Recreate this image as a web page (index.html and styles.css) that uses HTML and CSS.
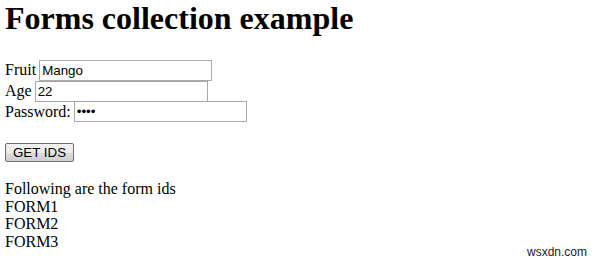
FILE: index.html
```html
<!DOCTYPE html>
<html>
<head>
<meta charset="utf-8">
<link rel="stylesheet" href="styles.css">
</head>
<body>
<h1 class="title">Forms collection example</h1>
<form class="row" id="FORM1"><span class="lbl">Fruit</span> <input class="field" type="text" value="Mango"></form>
<form class="row" id="FORM2"><span class="lbl">Age</span> <input class="field" type="text" value="22"></form>
<form class="row" id="FORM3"><span class="lbl">Password:</span> <input class="field" type="password" value="1234"></form>
<div class="btnwrap"><button class="btn" type="button">GET IDS</button></div>
<div class="result">
<div>Following are the form ids</div>
<div>FORM1</div>
<div>FORM2</div>
<div>FORM3</div>
</div>
<div class="mark">wsxdn.com</div>
</body>
</html>
```
FILE: styles.css
```css
html, body {
  margin: 0;
  padding: 0;
  background: #ffffff;
}
body {
  padding: 0 5px;
  font-family: "Liberation Serif", "Times New Roman", serif;
  font-size: 16px;
  color: #000;
  position: relative;
  height: 263px;
  box-sizing: border-box;
  overflow: hidden;
}
.title {
  font-size: 32px;
  font-weight: bold;
  margin: 0 0 23px 0;
  line-height: normal;
}
.row {
  margin: 0;
  height: 20.7px;
  display: flex;
  align-items: center;
}
.lbl {
  margin-right: 3px;
}
.field {
  box-sizing: border-box;
  width: 173px;
  height: 21px;
  border: 1px solid #a9a9a9;
  padding: 1px 2px;
  font-family: "Liberation Sans", Arial, sans-serif;
  font-size: 13.33px;
  color: #000;
  margin: 0;
  background: #fff;
}
.btnwrap {
  margin-top: 21px;
  height: 19px;
}
.btn {
  box-sizing: border-box;
  width: 69px;
  height: 19px;
  padding: 0;
  margin: 0;
  border: 1px solid #707070;
  border-radius: 2px;
  background: linear-gradient(#f2f2f2 0%, #ebebeb 50%, #dddddd 51%, #cfcfcf 100%);
  font-family: "Liberation Sans", Arial, sans-serif;
  font-size: 13.33px;
  color: #000;
  line-height: 17px;
}
.result {
  margin-top: 18px;
  line-height: 17.5px;
}
.mark {
  position: absolute;
  right: 12px;
  top: 245px;
  font-family: "Liberation Sans", Arial, sans-serif;
  font-size: 12px;
  color: #222;
}
```
